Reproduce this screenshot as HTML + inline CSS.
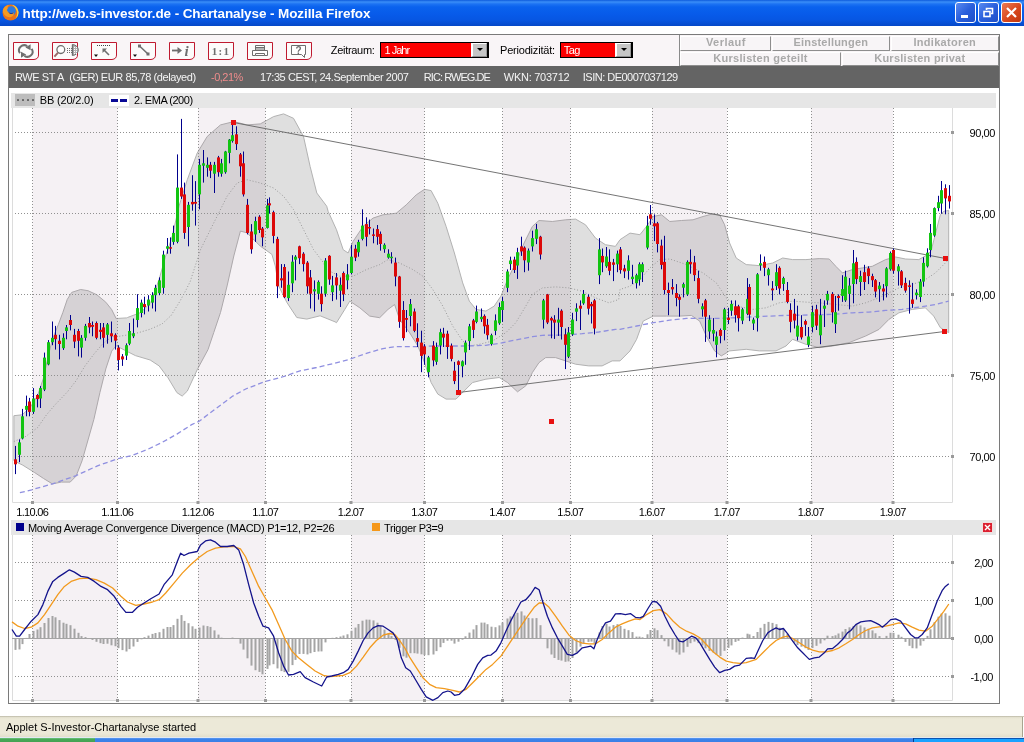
<!DOCTYPE html>
<html><head><meta charset="utf-8"><title>Chartanalyse - Mozilla Firefox</title>
<style>
html,body{margin:0;padding:0}
body{width:1024px;height:742px;position:relative;overflow:hidden;background:#fff;font-family:"Liberation Sans",Arial,sans-serif;font-size:12px;color:#000}
.abs{position:absolute}
#title{left:0;top:0;width:1024px;height:26px;background:linear-gradient(#0d5bdc 0,#3a8ef8 2px,#1c72f3 4px,#0a62ee 7px,#075ae9 15px,#0756e2 20px,#0548c8 26px)}
#title .t{left:22px;top:5px;color:#fff;font-weight:bold;font-size:13px;white-space:nowrap;text-shadow:1px 1px 0 #0a2a8a}
.wb{top:2px;width:19px;height:19px;border:1px solid #fff;border-radius:3px;background:linear-gradient(135deg,#5a8af0,#2a5fdc 50%,#1f4fc8)}
.wb.x{background:linear-gradient(135deg,#ec7a54,#d8481e 55%,#c03810)}
#frame{left:8px;top:34px;width:990px;height:668px;border:1px solid #7a7a7a;background:#fff}
#tbar{left:9px;top:35px;width:990px;height:31px;background:#f9f5f7}
.tb{top:42px;width:26px;height:18px}
#gbar{left:9px;top:66px;width:990px;height:22px;background:#646464}
#gbar span{position:absolute;top:4px;color:#f2f2f2;font-size:12px;white-space:nowrap;letter-spacing:-0.55px}
.leg{left:11px;width:985px;height:15px;background:#e6e6e6}
.leg span{position:absolute;top:0px;font-size:12px;white-space:nowrap;letter-spacing:-0.5px;line-height:15px}
.sel{top:42px;height:14px;border:1px solid #000;border-right-width:2px;background:#fb0000}
.sel i{position:absolute;right:0;top:0;width:16px;height:14px;box-sizing:border-box;background:#c6c6c6;border-left:2px solid #fff;border-top:1px solid #fff;border-bottom:1px solid #8c8c8c;border-right:1px solid #9a9a9a}
.sel i:after{content:"";position:absolute;left:3.5px;top:4px;border:3px solid transparent;border-top:3px solid #000;border-bottom:0}
.lbl{top:43px;font-size:12px;white-space:nowrap;letter-spacing:-0.2px}
.tab{border:1px solid;border-color:#fff #8e8e8e #8e8e8e #fff;background:#f8f5f7}
#status{left:0;top:716px;width:1024px;height:21px;background:linear-gradient(#b9b6a4,#e4e1cf 1.5px,#ece9d8 3px,#ece9d8 17px,#e2dfcc);box-sizing:border-box}
#status span{position:absolute;left:6px;top:3px;font-size:11px;white-space:nowrap}
</style></head><body>
<div id="title" class="abs">
<svg class="abs" style="left:1.5px;top:3.5px" width="17" height="17" viewBox="0 0 17 17"><circle cx="8.5" cy="8.5" r="8" fill="#ea721a"/><path d="M10 0.7A8 8 0 0 1 13.5 14.8A10 10 0 0 0 10 0.7Z" fill="#f8cf3c"/><circle cx="9.2" cy="7" r="4.7" fill="#2c7be0"/><path d="M0.7 6.5C1.5 3 4 1.2 7 1C5.5 2.2 5.2 3.4 5.8 4.6C4.6 5.4 4.8 7.2 6.4 8C8 9 10 9.2 11.8 8.4C12.4 10 11.2 12.4 9 13C5.6 13.8 1.6 12 0.7 6.5Z" fill="#f69a22"/><path d="M6.4 8C8 9 10 9.2 11.8 8.4C10.8 10.6 7.4 10.6 6.4 8Z" fill="#1c3a98"/></svg>
<div class="abs wb" style="left:955px"><div class="abs" style="left:5px;top:12px;width:7px;height:3px;background:#fff"></div></div>
<div class="abs wb" style="left:978px"><svg class="abs" style="left:0;top:0" width="19" height="19"><path d="M7.5 7V5.5H13.5V10.5H12" stroke="#fff" stroke-width="1.6" fill="none"/><rect x="5" y="8.5" width="6" height="5" stroke="#fff" stroke-width="1.6" fill="none"/></svg></div>
<div class="abs wb x" style="left:1001px"><svg class="abs" style="left:0;top:0" width="19" height="19"><path d="M5 5L14 14M14 5L5 14" stroke="#fff" stroke-width="2.2"/></svg></div>
</div>
<div id="frame" class="abs"></div><div id="tbar" class="abs"></div>
<!--TOOLBAR-->
<div class="abs sel" style="left:380px;width:106px"><i></i></div>
<div class="abs sel" style="left:560px;width:70px"><i></i></div>
<div class="abs" style="left:679px;top:35px;width:1px;height:31px;background:#8a8a8a"></div>
<div class="abs tab" style="left:680px;top:36px;width:89px;height:13px"></div>
<div class="abs tab" style="left:772px;top:36px;width:116px;height:13px"></div>
<div class="abs tab" style="left:891px;top:36px;width:106px;height:13px"></div>
<div class="abs tab" style="left:680px;top:52px;width:159px;height:12px"></div>
<div class="abs tab" style="left:842px;top:52px;width:155px;height:12px"></div>
<div id="gbar" class="abs"></div>
<div class="abs leg" style="top:93px">
<div class="abs" style="left:4px;top:1px;width:20px;height:12px;background:#bdbdbd"></div>
<div class="abs" style="left:5.5px;top:6px;width:2px;height:2px;border-radius:0.5px;background:#666;box-shadow:5px 0 0 #666,10px 0 0 #666,15px 0 0 #666"></div>
<div class="abs" style="left:98px;top:2px;width:20px;height:11px;background:#fff"></div>
<div class="abs" style="left:100px;top:6px;width:7px;height:3px;background:#0a0a96;box-shadow:9px 0 0 #0a0a96"></div>
</div>
<div class="abs leg" style="top:520px">
<div class="abs" style="left:5px;top:3px;width:8px;height:8px;background:#00008c"></div>
<div class="abs" style="left:360.5px;top:3px;width:8px;height:8px;background:#f5981a"></div>
<div class="abs" style="left:972px;top:3px;width:9px;height:9px;background:#dc2030;box-shadow:0 0 0 1px #f2dede"></div>
<svg class="abs" style="left:972px;top:3px" width="9" height="9"><path d="M2 2L7 7M7 2L2 7" stroke="#fff" stroke-width="1.4"/></svg>
</div>
<div id="status" class="abs"></div>
<div class="abs" style="left:0;top:737px;width:1024px;height:1px;background:#e2e9f2"></div>
<div class="abs" style="left:0;top:738px;width:1024px;height:4px;background:linear-gradient(#5c9af0,#3c82ea 1.5px,#3a80e6)"></div>
<div class="abs" style="left:0;top:738px;width:95px;height:4px;background:linear-gradient(#72c47c,#48a858 1.5px,#44a253)"></div>
<div class="abs" style="left:913px;top:738px;width:111px;height:4px;background:linear-gradient(#0c55b0,#0c55b0 1px,#1aa2ff 1.5px,#1aa2ff);border-left:1px solid #0a3a8a;box-sizing:border-box"></div>
<div class="abs" style="left:1022px;top:717px;width:2px;height:20px;background:#fff;border-left:1px solid #a8a590;box-sizing:border-box"></div>
<svg id="chart" width="1024" height="742" viewBox="0 0 1024 742" style="position:absolute;left:0;top:0;will-change:transform">
<rect x="12" y="108" width="940" height="394" fill="#fff"/>
<rect x="12" y="535" width="940" height="165" fill="#fff"/>
<path d="M13.9 415.7 L22.2 414.8 L30.2 407.4 L37.6 395.6 L43.6 377.8 L48 357 L52.4 339.3 L58.4 324.4 L62.8 312.6 L67.3 299.3 L71.7 292.4 L80.6 289.5 L88 290.7 L96.9 294.8 L105.8 302.2 L111.7 309.6 L116.1 318.5 L126.5 317.9 L127.5 317.5 L140.8 312.5 L150.8 302.5 L159.1 279.3 L165.7 256 L172.3 236.1 L179 206.2 L187.3 179.7 L197.2 153.1 L207.2 136.5 L220.5 124.9 L233.8 121.6 L247 124.9 L260.3 123.9 L273.6 116.6 L283.6 113.9 L293.5 118.3 L303.5 136.5 L310.1 166.4 L316.8 193 L326.7 206.2 L328.2 211.5 L336.5 229.8 L343.2 249.7 L348.1 253 L353.1 241.4 L363.1 226.4 L373 218.1 L383 214.8 L396.3 213.2 L406.2 204.9 L416.2 194.9 L424.5 189.3 L431.1 190.6 L437.8 203.2 L446.1 226.4 L454.4 253 L462.7 282.9 L469.3 301.1 L476 309.4 L485.9 311.1 L494.2 306.1 L500.9 296.2 L507.5 279.6 L515.8 263 L524.1 243 L532.4 226.4 L539 220.5 L552.3 221.5 L565.6 219.8 L575.6 219.1 L585.5 224.8 L595.5 238.1 L605.4 244.7 L615.4 246.4 L620 239.7 L630 233.1 L639.9 234.7 L646.6 226.4 L653.2 216.5 L661.5 214.8 L669.8 221.5 L681.4 220.5 L693 219.8 L703 216.5 L713 213.8 L719.6 214.8 L724.6 224.8 L729.6 243 L736.2 258 L746.2 264.6 L759.4 265.6 L772.7 263 L782.7 258 L792.6 259.6 L805.9 259.6 L819.2 258.6 L829.2 259 L835.8 266.3 L842.4 272.9 L852.4 269.6 L862.4 267.9 L872.3 266.3 L885.6 259.6 L895.6 257 L905.5 259 L918.8 259.6 L927.1 255 L931.1 251 L935.1 235.1 L940.4 214.5 L944 211.2 L948.7 210.5 L948.7 332.7 L940.4 327.7 L933.7 316.1 L925.4 307.8 L912.2 309.4 L898.9 312.8 L888.9 319.4 L879 329.4 L865.7 336 L849.1 342.6 L832.5 346 L819.2 347.6 L805.9 344.3 L792.6 339.3 L786 346 L776 350.9 L759.4 350.9 L746.2 349.3 L729.6 350.9 L721.3 355.9 L714.6 350.9 L706.3 336 L699.7 321.1 L691.4 315.4 L679.8 316.1 L666.5 316.1 L653.2 316.1 L643.2 321.1 L636.6 339.3 L630 350.9 L620 360.9 L612.1 360.9 L602.1 365.9 L588.8 365.9 L575.6 364.2 L565.6 360.9 L555.6 357.6 L545.7 357.6 L539 362.6 L532.4 372.5 L525.8 385.8 L517.5 391.8 L507.5 382.5 L499.2 377.5 L485.9 379.2 L472.6 382.5 L466 389.1 L456 399.1 L446.1 399.1 L437.8 394.1 L431.1 382.5 L424.5 362.6 L417.9 346 L409.6 332.7 L399.6 319.4 L394.6 304.5 L388 309.4 L379.7 317.7 L369.7 316.1 L359.8 307.8 L349.8 301.1 L344.8 309.4 L336.5 322.7 L335 321.8 L320.1 315.8 L306.8 319.1 L296.8 317.5 L286.9 302.5 L278.6 285.9 L275.3 266 L271.9 254.4 L260.3 246.1 L247 232.8 L240.4 231.1 L233.8 256 L227.1 285.9 L220.5 312.5 L213.8 332.4 L208 349.6 L197.6 368.9 L187.3 391.1 L182.2 396.1 L176.9 392.6 L168 377.8 L159.1 365.9 L150.2 360 L135.4 355.6 L126.5 351.1 L116.1 345.8 L111.7 351.1 L105.8 368.9 L99.9 392.6 L93.9 419.3 L88 440 L82.1 460.7 L76.1 476.1 L70.2 482.1 L61.3 482.1 L52.4 483.9 L43.6 478.5 L34.7 472.6 L22.8 465.2 L13.9 460.7Z" fill="#787878" fill-opacity="0.235" stroke="#b2b2b2" stroke-width="1" stroke-linejoin="round"/>
<rect x="32.5" y="108" width="85.0" height="394" fill="rgb(88,22,72)" fill-opacity="0.06"/>
<rect x="198" y="108" width="67.5" height="394" fill="rgb(88,22,72)" fill-opacity="0.06"/>
<rect x="351" y="108" width="73.5" height="394" fill="rgb(88,22,72)" fill-opacity="0.06"/>
<rect x="502.5" y="108" width="68.0" height="394" fill="rgb(88,22,72)" fill-opacity="0.06"/>
<rect x="652" y="108" width="75" height="394" fill="rgb(88,22,72)" fill-opacity="0.06"/>
<rect x="811" y="108" width="82" height="394" fill="rgb(88,22,72)" fill-opacity="0.06"/>
<rect x="32.5" y="535" width="85.0" height="165" fill="rgb(88,22,72)" fill-opacity="0.06"/>
<rect x="198" y="535" width="67.5" height="165" fill="rgb(88,22,72)" fill-opacity="0.06"/>
<rect x="351" y="535" width="73.5" height="165" fill="rgb(88,22,72)" fill-opacity="0.06"/>
<rect x="502.5" y="535" width="68.0" height="165" fill="rgb(88,22,72)" fill-opacity="0.06"/>
<rect x="652" y="535" width="75" height="165" fill="rgb(88,22,72)" fill-opacity="0.06"/>
<rect x="811" y="535" width="82" height="165" fill="rgb(88,22,72)" fill-opacity="0.06"/>
<path d="M32.5 108V502M32.5 535V700M117.5 108V502M117.5 535V700M198 108V502M198 535V700M265.5 108V502M265.5 535V700M351 108V502M351 535V700M424.5 108V502M424.5 535V700M502.5 108V502M502.5 535V700M570.5 108V502M570.5 535V700M652 108V502M652 535V700M727 108V502M727 535V700M811 108V502M811 535V700M893 108V502M893 535V700M12 132.5H952M12 213.5H952M12 294.5H952M12 375.5H952M12 456.5H952M12 562.5H952M12 600.5H952M12 638.5H952M12 676.5H952" stroke="#909090" stroke-width="1" stroke-dasharray="1 2" fill="none" shape-rendering="crispEdges"/>
<path d="M12.5 108V502.5H952.5V108M12.5 535V700.5H952.5V535" stroke="#dcdcdc" fill="none"/>
<g fill="#9a9a9a"><rect x="31.0" y="501" width="3" height="3"/><rect x="31.0" y="699" width="3" height="3"/><rect x="116.0" y="501" width="3" height="3"/><rect x="116.0" y="699" width="3" height="3"/><rect x="196.5" y="501" width="3" height="3"/><rect x="196.5" y="699" width="3" height="3"/><rect x="264.0" y="501" width="3" height="3"/><rect x="264.0" y="699" width="3" height="3"/><rect x="349.5" y="501" width="3" height="3"/><rect x="349.5" y="699" width="3" height="3"/><rect x="423.0" y="501" width="3" height="3"/><rect x="423.0" y="699" width="3" height="3"/><rect x="501.0" y="501" width="3" height="3"/><rect x="501.0" y="699" width="3" height="3"/><rect x="569.0" y="501" width="3" height="3"/><rect x="569.0" y="699" width="3" height="3"/><rect x="650.5" y="501" width="3" height="3"/><rect x="650.5" y="699" width="3" height="3"/><rect x="725.5" y="501" width="3" height="3"/><rect x="725.5" y="699" width="3" height="3"/><rect x="809.5" y="501" width="3" height="3"/><rect x="809.5" y="699" width="3" height="3"/><rect x="891.5" y="501" width="3" height="3"/><rect x="891.5" y="699" width="3" height="3"/><rect x="951" y="131.0" width="3" height="3"/><rect x="951" y="212.0" width="3" height="3"/><rect x="951" y="293.0" width="3" height="3"/><rect x="951" y="374.0" width="3" height="3"/><rect x="951" y="455.0" width="3" height="3"/><rect x="951" y="561.0" width="3" height="3"/><rect x="951" y="599.0" width="3" height="3"/><rect x="951" y="637.0" width="3" height="3"/><rect x="951" y="675.0" width="3" height="3"/></g>
<path d="M13.9 441.5 L25.8 436.4 L37.6 427.6 L46.5 414.8 L55.4 404.4 L67.3 392 L76.1 380.7 L85 365.9 L93.9 354.1 L102.8 343.7 L111.7 336.9 L119.1 336.3 L126.5 335.1 L138.4 332.7 L150.2 329.2 L162.1 323.9 L171 315.6 L179.9 301.3 L185.8 290.4 L190.2 281.5 L200.6 249.4 L213.8 222.8 L227.1 196.3 L237.1 183 L247 179.7 L260.3 183 L273.6 188 L283.6 196.3 L293.5 209.6 L303.5 229.5 L313.4 249.4 L323.4 262.7 L326.6 269.6 L339.8 276.2 L353.1 276.2 L366.4 269.6 L379.7 264.6 L388 259.6 L399.6 263 L412.9 269.6 L422.8 276.2 L432.8 289.5 L442.8 306.1 L452.7 326 L462.7 341 L469.3 346 L479.3 344.3 L492.6 341 L505.8 332.7 L515.8 322.7 L525.8 306.1 L532.4 294.5 L542.4 287.9 L555.6 286.9 L568.9 287.9 L582.2 291.2 L595.5 297.8 L608.8 302.8 L618.7 299.5 L620 289.5 L630 286.2 L639.9 279.6 L649.9 267.9 L659.8 259.6 L669.8 259 L686.4 264.6 L703 272.9 L716.3 282.9 L726.2 297.8 L736.2 306.1 L752.8 309.4 L766.1 307.8 L779.4 302.8 L792.6 301.1 L805.9 302.1 L819.2 302.8 L835.8 304.5 L852.4 306.1 L865.7 302.8 L879 297.8 L888.9 292.8 L898.9 287.9 L912.2 284.5 L925.4 279.6 L935.4 272.9 L943.7 264.6 L948.7 259.6" stroke="#9a9a9a" stroke-dasharray="1 2" fill="none"/>
<path d="M19.9 492.7 L31.7 489.8 L52.4 483.9 L76.1 475.6 L96.9 466.1 L117.6 458.7 L132.4 455.4 L147.3 449.5 L162.1 442.4 L176.9 434.1 L191.7 424.6 L199.2 421.2 L219.1 406.2 L232.4 396.3 L245.7 389 L265.6 381.3 L282.2 377 L300 370.9 L316.6 367.5 L333.2 363.6 L349.8 359.2 L366.4 353.3 L383 348.6 L396.3 346.6 L416.2 346.6 L432.8 346 L449.4 346 L466 346 L485.9 345.3 L499.2 343.3 L515.8 340 L532.4 336.7 L542.4 335.3 L565.6 335 L582.2 333.7 L598.8 332 L615.4 329.4 L620 329.4 L636.6 326 L653.2 322.7 L669.8 320.1 L686.4 318.4 L703 318.4 L719.6 318.4 L736.2 317.7 L752.8 316.7 L769.4 316.1 L786 315.4 L802.6 315.1 L819.2 314.8 L835.8 314.1 L852.4 312.8 L869 312.1 L885.6 310.4 L902.2 309.4 L918.8 307.1 L935.4 304.5 L948.7 301.1" stroke="#8f8fe0" stroke-width="1.3" stroke-dasharray="5 3" fill="none"/>
<path d="M233.5 122.5L945.5 258.5M458.5 392.5L944.5 331.5" stroke="#646464" stroke-width="0.9" fill="none"/>
<path d="M15.5 445.9V474.1M19.5 439.4V462.2M22.5 408.9V439.4M26.5 395.6V416.3M29.5 397.9V416.3M33.5 388.1V413.9M37.5 394.1V407.4M40.5 386.1V408M44.5 352.6V391.1M48.5 340.1V365.3M52.5 321.5V345.2M55.5 325.9V349.6M59.5 334.8V359.4M63.5 333.3V349.9M66.5 325V339.3M70.5 315V330.4M74.5 328.9V348.1M78.5 328.9V356.4M81.5 335.1V357.6M85.5 323.9V340.7M89.5 317V333.3M92.5 321.5V336.3M96.5 321.5V339.3M100.5 323V339.3M103.5 323V347.6M107.5 323V343.7M111.5 321.5V342.2M115.5 333.3V349.6M118.5 345.2V370.4M122.5 354.1V365.9M126.5 343.4V360M129.5 323V345.2M133.5 318.5V338.1M137.5 294.2V327.4M141.5 299.6V317.4M144.5 296.7V314.4M148.5 295.2V311.5M152.5 292.2V308.5M155.5 284.8V311.5M159.5 277.4V295.2M163.5 250.7V293.7M167.5 238V253.7M170.5 237.4V253.7M173.5 225.6V244.8M177.5 154.4V243.3M181.5 118.9V198.9M184.5 182.6V238.9M188.5 201.9V246.3M192.5 175.2V210.7M195.5 181.1V225.6M199.5 158.9V209.3M203.5 150V182.6M207.5 157.4V176.7M210.5 161.9V178.1M214.5 161.9V193M218.5 155.9V176.7M221.5 158.9V176.7M225.5 150.9V173.7M229.5 139V163.3M232.5 123.3V142.6M236.5 126.3V150M240.5 153V176.7M243.5 151.5V196.5M247.5 198.9V234.4M251.5 224.1V253.7M255.5 216.7V241.9M259.5 215.2V233M262.5 227V246.3M267.5 198.9V228.5M269.5 197.4V213.7M273.5 210.7V243.3M277.5 236.8V298.1M281.5 264.1V287.8M284.5 264.1V298.1M288.5 271.5V301.1M292.5 255.2V292.2M295.5 255.2V280.4M299.5 245.7V264.1M303.5 252.2V271.5M307.5 261.1V293.7M310.5 270V308.5M314.5 280.4V311.5M318.5 280.4V299.6M321.5 286.3V311.5M325.5 258.1V296.7M329.5 255.2V284.8M332.5 275.9V301.1M336.5 273V299.6M340.5 277.4V307M343.5 271.5V301.1M347.5 264.1V289.3M351.5 244.8V274.4M355.5 244.8V261.1M358.5 239.8V256.7M362.5 209.3V240.4M366.5 217.3V246.3M369.5 219.6V234.4M373.5 228.5V243.3M377.5 225V244.8M380.5 231.5V250.7M384.5 243.3V252.8M388.5 249.3V258.7M391.5 252.2V263.5M395.5 257.6V286.3M399.5 275.9V327.8M403.5 301.1V340.5M406.5 310V332.2M410.5 299V326.3M414.5 308.5V332.2M417.5 323.3V347M421.5 330.7V372.2M424.5 344.1V364.8M428.5 355.9V377.3M433.5 341.1V366.3M436.5 342.6V364.8M440.5 328.7V354.4M443.5 327.8V347M447.5 330.7V358.9M451.5 343.5V361.3M454.5 361.9V384.1M458.5 360.4V394.4M462.5 360.4V377.3M465.5 340.5V364.8M469.5 323.9V350M473.5 318.9V338.1M476.5 305.6V323.3M481.5 308.5V321.9M484.5 314.4V333.7M487.5 318.9V339.6M491.5 333.7V345.6M495.5 314.4V335.2M499.5 302.6V324.8M502.5 296.7V321.9M507.5 269.4V292.2M510.5 256.7V270M514.5 256.7V273M517.5 247.8V278.9M521.5 236.7V255.9M524.5 246.4V272.2M528.5 248.5V270.7M532.5 230.7V251.5M536.5 223.9V244.1M540.5 235.8V259.5M543.5 298.9V328.5M547.5 293.9V324.1M551.5 316.7V338.3M554.5 315.2V338.9M558.5 307.8V335.9M561.5 309.3V339.5M565.5 328.5V369.1M568.5 327V358.1M572.5 312.8V335.9M576.5 303.3V321.1M580.5 300.4V330M583.5 290V304.8M588.5 294.4V314.6M591.5 301.9V323.5M594.5 298.9V334.4M599.5 238.1V284.1M602.5 248.5V272.2M606.5 247V267.8M609.5 249.4V275.2M613.5 258.9V281.1M617.5 250.6V272.2M620.5 247V273.7M624.5 264.8V278.1M628.5 255.3V279.6M632.5 264.8V284.1M636.5 273.7V288.5M639.5 262.4V285.6M642.5 262.4V282M647.5 215.9V249.4M650.5 205V224.8M654.5 214.4V241.1M657.5 221.9V252.4M661.5 239.6V269.3M664.5 235.8V294.4M668.5 282.6V315.2M672.5 279V294.4M676.5 284.1V306.3M679.5 294.4V316.7M683.5 282.6V297.4M687.5 260.4V295.9M690.5 249.4V273.7M694.5 255.9V281.1M698.5 270.7V303.3M702.5 303.3V316.7M705.5 298.9V341.9M709.5 315.2V338.9M713.5 318.1V341.3M716.5 331.5V357.3M720.5 328.5V343.3M724.5 307.8V340.4M728.5 307.8V324.1M731.5 300.4V315.8M735.5 300.4V322.6M738.5 304.8V331.5M742.5 307.8V324.1M747.5 278.1V315.2M749.5 284.1V321.1M753.5 317.6V330M757.5 273.1V331.5M760.5 254.4V270.7M764.5 256.5V276.1M768.5 267.8V285.6M772.5 281.1V300.4M776.5 264.2V290M779.5 266.3V294.4M783.5 276.7V290.9M787.5 282V303.3M790.5 303.3V332.4M794.5 298.9V328.5M797.5 305.7V340.4M801.5 315.2V339.5M805.5 319.6V335.9M808.5 327V347.2M812.5 305.7V332.4M816.5 304.8V330M820.5 298.9V344.2M824.5 300.4V327M827.5 290.9V304.8M832.5 292.1V322.6M835.5 295.9V333M838.5 294.4V310.7M842.5 275.2V301.9M845.5 270.7V301.9M849.5 278.1V309.3M853.5 250V303.3M856.5 257.4V284.1M860.5 270.7V295.9M864.5 264.8V290M868.5 266.3V284.1M872.5 273.7V287M875.5 279V297.4M879.5 282V301.9M883.5 284.1V300.4M886.5 267.2V297.4M890.5 251.5V270.7M893.5 248.5V273.7M898.5 264.2V285.6M901.5 270.1V288M905.5 277.7V292.6M909.5 280.3V313.6M912.5 282.9V307.9M916.5 289.3V299.5M920.5 279V302.1M923.5 257.3V286.7M927.5 248.3V267.5M930.5 224V257.3M934.5 207.4V236.8M938.5 195.8V211.2M941.5 181V213.7M945.5 184.3V214.3M949.5 185.1V208.6" stroke="#00008c" stroke-width="1" fill="none"/>
<g fill="#12c412"><rect x="18" y="442.4" width="3" height="12.4"/><rect x="21" y="416.3" width="3" height="22.2"/><rect x="25" y="405.9" width="3" height="3.9"/><rect x="32" y="398.5" width="3" height="13.3"/><rect x="39" y="388.1" width="3" height="10.4"/><rect x="43" y="357.6" width="3" height="32"/><rect x="47" y="342.2" width="3" height="22.2"/><rect x="51" y="337.8" width="3" height="4.4"/><rect x="62" y="337.8" width="3" height="10.4"/><rect x="65" y="327.4" width="3" height="3.6"/><rect x="80" y="337.8" width="3" height="9.8"/><rect x="84" y="325.9" width="3" height="11.9"/><rect x="106" y="324.4" width="3" height="10.4"/><rect x="125" y="345.2" width="3" height="10.4"/><rect x="128" y="331" width="3" height="12.7"/><rect x="132" y="333.3" width="3" height="3"/><rect x="136" y="308.1" width="3" height="11.9"/><rect x="140" y="302.6" width="3" height="10.4"/><rect x="147" y="299.6" width="3" height="5.9"/><rect x="151" y="295.2" width="3" height="7.4"/><rect x="154" y="287.8" width="3" height="7.4"/><rect x="158" y="280.4" width="3" height="12.7"/><rect x="162" y="254.6" width="3" height="33.2"/><rect x="166" y="246.3" width="3" height="2.4"/><rect x="172" y="233" width="3" height="8.9"/><rect x="176" y="187.6" width="3" height="54.2"/><rect x="187" y="204.8" width="3" height="22.2"/><rect x="198" y="164.8" width="3" height="29.6"/><rect x="202" y="163.3" width="3" height="2.4"/><rect x="206" y="164.8" width="3" height="3"/><rect x="213" y="164.8" width="3" height="8.9"/><rect x="220" y="163.3" width="3" height="10.4"/><rect x="224" y="151.5" width="3" height="20.7"/><rect x="228" y="139.6" width="3" height="13.3"/><rect x="231" y="135.2" width="3" height="5.9"/><rect x="254" y="221.1" width="3" height="13.3"/><rect x="266" y="205.4" width="3" height="22.5"/><rect x="287" y="284.8" width="3" height="13.3"/><rect x="291" y="261.7" width="3" height="21.6"/><rect x="294" y="256.7" width="3" height="3"/><rect x="313" y="289.3" width="3" height="2.1"/><rect x="317" y="281.9" width="3" height="11.9"/><rect x="324" y="260.5" width="3" height="33.2"/><rect x="331" y="285.4" width="3" height="6.8"/><rect x="339" y="284.8" width="3" height="5.9"/><rect x="346" y="274.4" width="3" height="5.9"/><rect x="350" y="256.7" width="3" height="16.3"/><rect x="357" y="241.9" width="3" height="10.4"/><rect x="361" y="225.6" width="3" height="13.3"/><rect x="383" y="244.8" width="3" height="4.4"/><rect x="387" y="253.7" width="3" height="3.9"/><rect x="390" y="256.7" width="3" height="1.5"/><rect x="409" y="304.1" width="3" height="11.9"/><rect x="427" y="357.4" width="3" height="14.8"/><rect x="435" y="347" width="3" height="14.8"/><rect x="439" y="332.2" width="3" height="13.3"/><rect x="461" y="361.3" width="3" height="5"/><rect x="464" y="342.6" width="3" height="9.8"/><rect x="468" y="326.3" width="3" height="14.8"/><rect x="475" y="311.5" width="3" height="10.4"/><rect x="480" y="316.8" width="3" height="2.4"/><rect x="490" y="335.2" width="3" height="8.9"/><rect x="494" y="320.4" width="3" height="10.4"/><rect x="498" y="307" width="3" height="16.3"/><rect x="501" y="301.1" width="3" height="8.9"/><rect x="506" y="271.5" width="3" height="16.3"/><rect x="509" y="260.5" width="3" height="3.6"/><rect x="516" y="252.2" width="3" height="13.3"/><rect x="527" y="250.6" width="3" height="11.9"/><rect x="531" y="238.1" width="3" height="8.3"/><rect x="535" y="229.3" width="3" height="9.5"/><rect x="542" y="300.4" width="3" height="19.3"/><rect x="557" y="319.6" width="3" height="3"/><rect x="567" y="332.4" width="3" height="24.3"/><rect x="571" y="319.6" width="3" height="14.8"/><rect x="575" y="308.4" width="3" height="3.3"/><rect x="582" y="293.9" width="3" height="9.5"/><rect x="598" y="249.4" width="3" height="25.8"/><rect x="605" y="256.5" width="3" height="9.8"/><rect x="616" y="253.6" width="3" height="10.7"/><rect x="627" y="260.4" width="3" height="10.4"/><rect x="631" y="276.7" width="3" height="2.4"/><rect x="635" y="275.2" width="3" height="8"/><rect x="638" y="264.2" width="3" height="15.4"/><rect x="641" y="264.2" width="3" height="8"/><rect x="646" y="225.7" width="3" height="21.9"/><rect x="682" y="284.1" width="3" height="3.6"/><rect x="686" y="261.9" width="3" height="32.6"/><rect x="701" y="306.3" width="3" height="3"/><rect x="708" y="319.6" width="3" height="11.9"/><rect x="712" y="330" width="3" height="3.6"/><rect x="715" y="336.5" width="3" height="8.3"/><rect x="723" y="309.3" width="3" height="20.7"/><rect x="730" y="303.9" width="3" height="6.8"/><rect x="741" y="309.3" width="3" height="11.3"/><rect x="746" y="298.9" width="3" height="14.8"/><rect x="752" y="319.6" width="3" height="3.9"/><rect x="756" y="274.3" width="3" height="43.9"/><rect x="759" y="263.3" width="3" height="2.1"/><rect x="767" y="269.3" width="3" height="5.9"/><rect x="775" y="272.2" width="3" height="13.9"/><rect x="782" y="278.1" width="3" height="5.9"/><rect x="796" y="325.6" width="3" height="11"/><rect x="807" y="336.5" width="3" height="8.3"/><rect x="811" y="312.2" width="3" height="14.8"/><rect x="819" y="315.2" width="3" height="20.1"/><rect x="823" y="305.7" width="3" height="3"/><rect x="826" y="293.9" width="3" height="6.5"/><rect x="834" y="312.2" width="3" height="11.9"/><rect x="841" y="289.1" width="3" height="6.8"/><rect x="844" y="276.7" width="3" height="23.7"/><rect x="848" y="285.6" width="3" height="8.3"/><rect x="852" y="263.3" width="3" height="20.7"/><rect x="859" y="276.1" width="3" height="5.9"/><rect x="878" y="285.6" width="3" height="3.6"/><rect x="885" y="268.4" width="3" height="17.8"/><rect x="889" y="253" width="3" height="16.3"/><rect x="897" y="266.3" width="3" height="5"/><rect x="915" y="292.6" width="3" height="2.6"/><rect x="919" y="281.6" width="3" height="15.4"/><rect x="922" y="262.9" width="3" height="18.7"/><rect x="926" y="252.7" width="3" height="13.6"/><rect x="929" y="232.9" width="3" height="17.1"/><rect x="933" y="208.1" width="3" height="27.4"/><rect x="937" y="202.2" width="3" height="5.9"/><rect x="940" y="190.2" width="3" height="13.3"/></g>
<g fill="#dc0808"><rect x="14" y="459.3" width="3" height="5"/><rect x="28" y="401.5" width="3" height="10.4"/><rect x="36" y="395" width="3" height="4.1"/><rect x="54" y="334.8" width="3" height="4.4"/><rect x="58" y="340.7" width="3" height="3.3"/><rect x="69" y="320" width="3" height="5"/><rect x="73" y="334.8" width="3" height="6.8"/><rect x="77" y="331" width="3" height="9.8"/><rect x="88" y="323" width="3" height="4.4"/><rect x="91" y="325" width="3" height="1.8"/><rect x="95" y="323" width="3" height="14.8"/><rect x="99" y="329.8" width="3" height="2.1"/><rect x="102" y="327.4" width="3" height="10.4"/><rect x="110" y="333.3" width="3" height="3"/><rect x="114" y="334.8" width="3" height="5.9"/><rect x="117" y="347.6" width="3" height="12.4"/><rect x="121" y="356.4" width="3" height="3"/><rect x="143" y="304.1" width="3" height="3"/><rect x="169" y="247.2" width="3" height="1.5"/><rect x="180" y="187.6" width="3" height="8.9"/><rect x="183" y="194.4" width="3" height="38.5"/><rect x="191" y="201.9" width="3" height="2.4"/><rect x="194" y="201.9" width="3" height="1.8"/><rect x="209" y="164.8" width="3" height="5.9"/><rect x="217" y="157.4" width="3" height="14.8"/><rect x="235" y="134.3" width="3" height="9.8"/><rect x="239" y="154.4" width="3" height="11.9"/><rect x="242" y="163.3" width="3" height="31.1"/><rect x="246" y="204.8" width="3" height="28.1"/><rect x="250" y="231.5" width="3" height="17.8"/><rect x="258" y="216.7" width="3" height="13.3"/><rect x="261" y="228.5" width="3" height="8.9"/><rect x="268" y="203.3" width="3" height="2.1"/><rect x="272" y="212.2" width="3" height="23.7"/><rect x="276" y="238.9" width="3" height="47.4"/><rect x="280" y="278.3" width="3" height="2.1"/><rect x="283" y="267" width="3" height="30.2"/><rect x="298" y="246.3" width="3" height="11.9"/><rect x="302" y="253.7" width="3" height="10.4"/><rect x="306" y="262.6" width="3" height="23.7"/><rect x="309" y="277.4" width="3" height="16.3"/><rect x="320" y="293.7" width="3" height="10.4"/><rect x="328" y="255.8" width="3" height="23.7"/><rect x="335" y="277.4" width="3" height="8"/><rect x="342" y="273" width="3" height="21.3"/><rect x="354" y="248.7" width="3" height="8.9"/><rect x="365" y="224.1" width="3" height="12.7"/><rect x="368" y="227" width="3" height="1.5"/><rect x="372" y="234.4" width="3" height="1.5"/><rect x="376" y="229.1" width="3" height="7.7"/><rect x="379" y="233.9" width="3" height="10.1"/><rect x="394" y="262.6" width="3" height="13.9"/><rect x="398" y="276.5" width="3" height="45.3"/><rect x="402" y="310" width="3" height="28.1"/><rect x="405" y="318" width="3" height="1.8"/><rect x="413" y="311.5" width="3" height="19.3"/><rect x="416" y="338.1" width="3" height="3.6"/><rect x="420" y="342.6" width="3" height="13.3"/><rect x="423" y="346.4" width="3" height="8"/><rect x="432" y="345.6" width="3" height="14.8"/><rect x="442" y="333.7" width="3" height="3.9"/><rect x="446" y="333.7" width="3" height="13.3"/><rect x="450" y="345.6" width="3" height="13.3"/><rect x="453" y="370.7" width="3" height="10.4"/><rect x="457" y="361.3" width="3" height="3.6"/><rect x="472" y="320.4" width="3" height="9.5"/><rect x="483" y="315.9" width="3" height="10.4"/><rect x="486" y="324.8" width="3" height="10.4"/><rect x="513" y="259.6" width="3" height="10.4"/><rect x="520" y="246.4" width="3" height="5"/><rect x="523" y="247.6" width="3" height="12.7"/><rect x="539" y="236.7" width="3" height="17.8"/><rect x="546" y="294.4" width="3" height="28.1"/><rect x="550" y="318.1" width="3" height="2.4"/><rect x="553" y="319.6" width="3" height="3"/><rect x="560" y="310.7" width="3" height="16.3"/><rect x="564" y="334.4" width="3" height="10.4"/><rect x="579" y="305.7" width="3" height="3"/><rect x="587" y="296.8" width="3" height="11.9"/><rect x="590" y="303.9" width="3" height="2.4"/><rect x="593" y="300.4" width="3" height="28.1"/><rect x="601" y="255.9" width="3" height="6.5"/><rect x="608" y="261.9" width="3" height="8.9"/><rect x="612" y="262.4" width="3" height="2.4"/><rect x="619" y="249.4" width="3" height="20.7"/><rect x="623" y="268.4" width="3" height="3"/><rect x="649" y="214.4" width="3" height="4.4"/><rect x="653" y="223.3" width="3" height="3"/><rect x="656" y="223.3" width="3" height="20.7"/><rect x="660" y="245.6" width="3" height="19.3"/><rect x="663" y="261.9" width="3" height="28.1"/><rect x="667" y="290" width="3" height="3"/><rect x="671" y="287" width="3" height="2.4"/><rect x="675" y="293" width="3" height="5"/><rect x="678" y="296.8" width="3" height="3"/><rect x="689" y="261.9" width="3" height="2.4"/><rect x="693" y="262.4" width="3" height="12.7"/><rect x="697" y="278.1" width="3" height="20.7"/><rect x="704" y="300.4" width="3" height="16.3"/><rect x="719" y="330" width="3" height="5.9"/><rect x="727" y="317.6" width="3" height="2.4"/><rect x="734" y="306.3" width="3" height="8.9"/><rect x="737" y="306.3" width="3" height="11.9"/><rect x="748" y="287" width="3" height="27.6"/><rect x="763" y="261.9" width="3" height="5.9"/><rect x="771" y="288.5" width="3" height="1.8"/><rect x="778" y="267.8" width="3" height="20.7"/><rect x="786" y="290" width="3" height="11.9"/><rect x="789" y="309.9" width="3" height="11.9"/><rect x="793" y="313.7" width="3" height="6.8"/><rect x="800" y="327" width="3" height="10.4"/><rect x="804" y="321.1" width="3" height="3.6"/><rect x="815" y="309.3" width="3" height="16.3"/><rect x="831" y="293.9" width="3" height="18.4"/><rect x="837" y="295.9" width="3" height="2.1"/><rect x="855" y="261.9" width="3" height="17.2"/><rect x="863" y="272.2" width="3" height="9.8"/><rect x="867" y="268.4" width="3" height="7.7"/><rect x="871" y="276.1" width="3" height="4.1"/><rect x="874" y="280.2" width="3" height="11.3"/><rect x="882" y="288.5" width="3" height="3"/><rect x="892" y="250" width="3" height="20.7"/><rect x="900" y="271.3" width="3" height="14.1"/><rect x="904" y="282.9" width="3" height="7.7"/><rect x="908" y="285.4" width="3" height="1.5"/><rect x="911" y="299.5" width="3" height="4.4"/><rect x="944" y="188.2" width="3" height="10.2"/><rect x="948" y="195.8" width="3" height="5.6"/></g>
<rect x="231.0" y="120.0" width="5" height="5" fill="#e81010"/>
<rect x="943.0" y="256.0" width="5" height="5" fill="#e81010"/>
<rect x="456.0" y="390.0" width="5" height="5" fill="#e81010"/>
<rect x="942.0" y="329.0" width="5" height="5" fill="#e81010"/>
<rect x="549.0" y="419.0" width="5" height="5" fill="#e81010"/>
<g fill="#a4a4a4"><rect x="14.5" y="638.5" width="2" height="11.4"/><rect x="18.5" y="638.5" width="2" height="10.9"/><rect x="21.5" y="638.5" width="2" height="5.6"/><rect x="25.5" y="637.9" width="2" height="0.6"/><rect x="28.5" y="634" width="2" height="4.5"/><rect x="32.5" y="631" width="2" height="7.5"/><rect x="36.5" y="629.5" width="2" height="9"/><rect x="39.5" y="627.2" width="2" height="11.3"/><rect x="43.5" y="623" width="2" height="15.5"/><rect x="47.5" y="618" width="2" height="20.5"/><rect x="51.5" y="616" width="2" height="22.5"/><rect x="54.5" y="617.3" width="2" height="21.2"/><rect x="58.5" y="620.1" width="2" height="18.4"/><rect x="62.5" y="622.7" width="2" height="15.8"/><rect x="65.5" y="623.8" width="2" height="14.7"/><rect x="69.5" y="625.2" width="2" height="13.3"/><rect x="73.5" y="628.7" width="2" height="9.8"/><rect x="77.5" y="632.8" width="2" height="5.7"/><rect x="80.5" y="636.1" width="2" height="2.4"/><rect x="84.5" y="637.1" width="2" height="1.4"/><rect x="91.5" y="638.5" width="2" height="1.4"/><rect x="95.5" y="638.5" width="2" height="3.3"/><rect x="99.5" y="638.5" width="2" height="4.7"/><rect x="102.5" y="638.5" width="2" height="5.5"/><rect x="106.5" y="638.5" width="2" height="5.2"/><rect x="110.5" y="638.5" width="2" height="6.8"/><rect x="114.5" y="638.5" width="2" height="7.7"/><rect x="117.5" y="638.5" width="2" height="9.7"/><rect x="121.5" y="638.5" width="2" height="11.6"/><rect x="125.5" y="638.5" width="2" height="13"/><rect x="128.5" y="638.5" width="2" height="10.6"/><rect x="132.5" y="638.5" width="2" height="8"/><rect x="136.5" y="638.5" width="2" height="3.4"/><rect x="140.5" y="638.5" width="2" height="0.8"/><rect x="143.5" y="637.2" width="2" height="1.3"/><rect x="147.5" y="635.6" width="2" height="2.9"/><rect x="151.5" y="633.9" width="2" height="4.6"/><rect x="154.5" y="633" width="2" height="5.5"/><rect x="158.5" y="632.2" width="2" height="6.3"/><rect x="162.5" y="628.8" width="2" height="9.7"/><rect x="166.5" y="627" width="2" height="11.5"/><rect x="169.5" y="627" width="2" height="11.5"/><rect x="172.5" y="625.1" width="2" height="13.4"/><rect x="176.5" y="618.8" width="2" height="19.7"/><rect x="180.5" y="615.1" width="2" height="23.4"/><rect x="183.5" y="620.9" width="2" height="17.6"/><rect x="187.5" y="623.2" width="2" height="15.3"/><rect x="191.5" y="626.3" width="2" height="12.2"/><rect x="194.5" y="628.8" width="2" height="9.7"/><rect x="198.5" y="627.6" width="2" height="10.9"/><rect x="202.5" y="625.5" width="2" height="13"/><rect x="206.5" y="626.1" width="2" height="12.4"/><rect x="209.5" y="626.9" width="2" height="11.6"/><rect x="213.5" y="630.4" width="2" height="8.1"/><rect x="217.5" y="634.6" width="2" height="3.9"/><rect x="220.5" y="637.7" width="2" height="0.8"/><rect x="228.5" y="638" width="2" height="0.5"/><rect x="231.5" y="637.6" width="2" height="0.9"/><rect x="239.5" y="638.5" width="2" height="5.1"/><rect x="242.5" y="638.5" width="2" height="11.1"/><rect x="246.5" y="638.5" width="2" height="19.8"/><rect x="250.5" y="638.5" width="2" height="27.1"/><rect x="254.5" y="638.5" width="2" height="31.7"/><rect x="258.5" y="638.5" width="2" height="33.4"/><rect x="261.5" y="638.5" width="2" height="35.8"/><rect x="266.5" y="638.5" width="2" height="30.4"/><rect x="268.5" y="638.5" width="2" height="26.9"/><rect x="272.5" y="638.5" width="2" height="25.7"/><rect x="276.5" y="638.5" width="2" height="29.9"/><rect x="280.5" y="638.5" width="2" height="32.6"/><rect x="283.5" y="638.5" width="2" height="33.6"/><rect x="287.5" y="638.5" width="2" height="33.3"/><rect x="291.5" y="638.5" width="2" height="26.6"/><rect x="294.5" y="638.5" width="2" height="21.4"/><rect x="298.5" y="638.5" width="2" height="15.5"/><rect x="302.5" y="638.5" width="2" height="15.4"/><rect x="306.5" y="638.5" width="2" height="15.9"/><rect x="309.5" y="638.5" width="2" height="14.7"/><rect x="313.5" y="638.5" width="2" height="13.5"/><rect x="317.5" y="638.5" width="2" height="13"/><rect x="320.5" y="638.5" width="2" height="12.9"/><rect x="324.5" y="638.5" width="2" height="3.9"/><rect x="331.5" y="637.8" width="2" height="0.7"/><rect x="335.5" y="637.2" width="2" height="1.3"/><rect x="339.5" y="636.5" width="2" height="2"/><rect x="342.5" y="635.5" width="2" height="3"/><rect x="346.5" y="634.3" width="2" height="4.2"/><rect x="350.5" y="630.8" width="2" height="7.7"/><rect x="354.5" y="627.6" width="2" height="10.9"/><rect x="357.5" y="624" width="2" height="14.5"/><rect x="361.5" y="620.7" width="2" height="17.8"/><rect x="365.5" y="619.6" width="2" height="18.9"/><rect x="368.5" y="619.7" width="2" height="18.8"/><rect x="372.5" y="620.4" width="2" height="18.1"/><rect x="376.5" y="622.7" width="2" height="15.8"/><rect x="379.5" y="625.6" width="2" height="12.9"/><rect x="383.5" y="629.6" width="2" height="8.9"/><rect x="387.5" y="633.3" width="2" height="5.2"/><rect x="390.5" y="636.1" width="2" height="2.4"/><rect x="394.5" y="638.5" width="2" height="1.5"/><rect x="398.5" y="638.5" width="2" height="9.3"/><rect x="402.5" y="638.5" width="2" height="17.8"/><rect x="405.5" y="638.5" width="2" height="19.2"/><rect x="409.5" y="638.5" width="2" height="14.7"/><rect x="413.5" y="638.5" width="2" height="14.7"/><rect x="416.5" y="638.5" width="2" height="15.1"/><rect x="420.5" y="638.5" width="2" height="15.8"/><rect x="423.5" y="638.5" width="2" height="16.6"/><rect x="427.5" y="638.5" width="2" height="16.7"/><rect x="432.5" y="638.5" width="2" height="16"/><rect x="435.5" y="638.5" width="2" height="12.6"/><rect x="439.5" y="638.5" width="2" height="8.7"/><rect x="442.5" y="638.5" width="2" height="4.4"/><rect x="446.5" y="638.5" width="2" height="2.2"/><rect x="450.5" y="638.5" width="2" height="2.2"/><rect x="453.5" y="638.5" width="2" height="5.1"/><rect x="457.5" y="638.5" width="2" height="3.2"/><rect x="461.5" y="638.5" width="2" height="1.2"/><rect x="464.5" y="636.3" width="2" height="2.2"/><rect x="468.5" y="632.6" width="2" height="5.9"/><rect x="472.5" y="629.4" width="2" height="9.1"/><rect x="475.5" y="625.1" width="2" height="13.4"/><rect x="480.5" y="622.6" width="2" height="15.9"/><rect x="483.5" y="622.6" width="2" height="15.9"/><rect x="486.5" y="624.2" width="2" height="14.3"/><rect x="490.5" y="626.7" width="2" height="11.8"/><rect x="494.5" y="627.2" width="2" height="11.3"/><rect x="498.5" y="625.4" width="2" height="13.1"/><rect x="501.5" y="622.5" width="2" height="16"/><rect x="506.5" y="618.5" width="2" height="20"/><rect x="509.5" y="616.4" width="2" height="22.1"/><rect x="513.5" y="614.3" width="2" height="24.2"/><rect x="516.5" y="612.8" width="2" height="25.7"/><rect x="520.5" y="611.4" width="2" height="27.1"/><rect x="523.5" y="615.5" width="2" height="23"/><rect x="527.5" y="617.9" width="2" height="20.6"/><rect x="531.5" y="618.3" width="2" height="20.2"/><rect x="535.5" y="618.1" width="2" height="20.4"/><rect x="539.5" y="625.2" width="2" height="13.3"/><rect x="546.5" y="638.5" width="2" height="9.8"/><rect x="550.5" y="638.5" width="2" height="16"/><rect x="553.5" y="638.5" width="2" height="19.5"/><rect x="557.5" y="638.5" width="2" height="21.4"/><rect x="560.5" y="638.5" width="2" height="22.1"/><rect x="564.5" y="638.5" width="2" height="23.3"/><rect x="567.5" y="638.5" width="2" height="22.9"/><rect x="571.5" y="638.5" width="2" height="19.5"/><rect x="575.5" y="638.5" width="2" height="14.1"/><rect x="579.5" y="638.5" width="2" height="8.1"/><rect x="582.5" y="638.5" width="2" height="4.9"/><rect x="587.5" y="638.5" width="2" height="3.4"/><rect x="590.5" y="638.5" width="2" height="3.1"/><rect x="593.5" y="638.5" width="2" height="5"/><rect x="598.5" y="632.5" width="2" height="6"/><rect x="601.5" y="626" width="2" height="12.5"/><rect x="605.5" y="623.7" width="2" height="14.8"/><rect x="608.5" y="626.5" width="2" height="12"/><rect x="612.5" y="625.1" width="2" height="13.4"/><rect x="616.5" y="624.2" width="2" height="14.3"/><rect x="619.5" y="626" width="2" height="12.5"/><rect x="623.5" y="628.8" width="2" height="9.7"/><rect x="627.5" y="630.2" width="2" height="8.3"/><rect x="631.5" y="632.1" width="2" height="6.4"/><rect x="635.5" y="636.6" width="2" height="1.9"/><rect x="638.5" y="636.6" width="2" height="1.9"/><rect x="641.5" y="637.3" width="2" height="1.2"/><rect x="646.5" y="634.3" width="2" height="4.2"/><rect x="649.5" y="630" width="2" height="8.5"/><rect x="653.5" y="628.3" width="2" height="10.2"/><rect x="656.5" y="630.2" width="2" height="8.3"/><rect x="660.5" y="635.1" width="2" height="3.4"/><rect x="663.5" y="638.5" width="2" height="2.7"/><rect x="667.5" y="638.5" width="2" height="7.9"/><rect x="671.5" y="638.5" width="2" height="11.2"/><rect x="675.5" y="638.5" width="2" height="13.9"/><rect x="678.5" y="638.5" width="2" height="16.1"/><rect x="682.5" y="638.5" width="2" height="14"/><rect x="686.5" y="638.5" width="2" height="8.3"/><rect x="689.5" y="638.5" width="2" height="4.7"/><rect x="693.5" y="638.5" width="2" height="3.1"/><rect x="697.5" y="638.5" width="2" height="4.6"/><rect x="701.5" y="638.5" width="2" height="7"/><rect x="704.5" y="638.5" width="2" height="9.8"/><rect x="708.5" y="638.5" width="2" height="12.4"/><rect x="712.5" y="638.5" width="2" height="14"/><rect x="715.5" y="638.5" width="2" height="16.2"/><rect x="719.5" y="638.5" width="2" height="17.4"/><rect x="723.5" y="638.5" width="2" height="12.3"/><rect x="727.5" y="638.5" width="2" height="9.4"/><rect x="730.5" y="638.5" width="2" height="6.9"/><rect x="734.5" y="638.5" width="2" height="3.4"/><rect x="737.5" y="638.5" width="2" height="2.3"/><rect x="741.5" y="637.6" width="2" height="0.9"/><rect x="746.5" y="633.7" width="2" height="4.8"/><rect x="748.5" y="634.4" width="2" height="4.1"/><rect x="752.5" y="636" width="2" height="2.5"/><rect x="756.5" y="632" width="2" height="6.5"/><rect x="759.5" y="627.8" width="2" height="10.7"/><rect x="763.5" y="623.9" width="2" height="14.6"/><rect x="767.5" y="621.9" width="2" height="16.6"/><rect x="771.5" y="622.9" width="2" height="15.6"/><rect x="775.5" y="624.2" width="2" height="14.3"/><rect x="778.5" y="627.7" width="2" height="10.8"/><rect x="782.5" y="629" width="2" height="9.5"/><rect x="786.5" y="633.9" width="2" height="4.6"/><rect x="793.5" y="638.5" width="2" height="4.1"/><rect x="796.5" y="638.5" width="2" height="6.6"/><rect x="800.5" y="638.5" width="2" height="8.2"/><rect x="804.5" y="638.5" width="2" height="9.7"/><rect x="807.5" y="638.5" width="2" height="11.5"/><rect x="811.5" y="638.5" width="2" height="9.5"/><rect x="815.5" y="638.5" width="2" height="7.3"/><rect x="819.5" y="638.5" width="2" height="5"/><rect x="823.5" y="638.5" width="2" height="1.8"/><rect x="826.5" y="635.7" width="2" height="2.8"/><rect x="831.5" y="636.1" width="2" height="2.4"/><rect x="834.5" y="635.3" width="2" height="3.2"/><rect x="837.5" y="633.5" width="2" height="5"/><rect x="841.5" y="631.6" width="2" height="6.9"/><rect x="844.5" y="629" width="2" height="9.5"/><rect x="848.5" y="627.3" width="2" height="11.2"/><rect x="852.5" y="625.9" width="2" height="12.6"/><rect x="855.5" y="624.7" width="2" height="13.8"/><rect x="859.5" y="625.4" width="2" height="13.1"/><rect x="863.5" y="627.4" width="2" height="11.1"/><rect x="867.5" y="628.8" width="2" height="9.7"/><rect x="871.5" y="630.4" width="2" height="8.1"/><rect x="874.5" y="633.3" width="2" height="5.2"/><rect x="878.5" y="636.1" width="2" height="2.4"/><rect x="882.5" y="638.5" width="2" height="0.6"/><rect x="885.5" y="635.9" width="2" height="2.6"/><rect x="889.5" y="632.8" width="2" height="5.7"/><rect x="892.5" y="632.8" width="2" height="5.7"/><rect x="897.5" y="634.7" width="2" height="3.8"/><rect x="900.5" y="636.8" width="2" height="1.7"/><rect x="904.5" y="638.5" width="2" height="3.4"/><rect x="908.5" y="638.5" width="2" height="7.3"/><rect x="911.5" y="638.5" width="2" height="9.7"/><rect x="915.5" y="638.5" width="2" height="9.9"/><rect x="919.5" y="638.5" width="2" height="7.1"/><rect x="922.5" y="638.5" width="2" height="2.6"/><rect x="926.5" y="635.9" width="2" height="2.6"/><rect x="929.5" y="629.3" width="2" height="9.2"/><rect x="933.5" y="622.2" width="2" height="16.3"/><rect x="937.5" y="616.7" width="2" height="21.8"/><rect x="940.5" y="613.6" width="2" height="24.9"/><rect x="944.5" y="613.3" width="2" height="25.2"/><rect x="948.5" y="615.7" width="2" height="22.8"/></g>
<path d="M12 638.5H952" stroke="#a4a4a4" stroke-width="1"/>
<path d="M12 621.9 L18 626.2 L24.6 628.5 L31.2 627.2 L37.9 622.9 L44.5 614.6 L51.2 604.6 L57.8 594.7 L64.4 586.4 L71.1 581.4 L79.4 578.7 L87.7 578.1 L96 579.7 L104.3 583.1 L112.6 588 L120.9 596.3 L127.5 602 L135.8 605.3 L144.1 604 L152.4 602 L159.1 599.7 L165.7 593 L174 583.1 L182.3 573.1 L190.6 564.8 L198.9 557.5 L207.2 551.5 L215.5 548.2 L223.8 546.9 L233.8 546.5 L240.4 548.9 L245.4 556.5 L252 571.4 L258.7 586.4 L265.3 598 L271.9 609.6 L278.6 624.6 L285.2 639.5 L291.9 651.1 L298.5 657.8 L306.8 664.4 L315.1 671 L323.4 675.4 L330 676.7 L336.7 676 L343.3 675.4 L349.9 672.7 L356.5 666.1 L363.2 657.1 L369.8 647.8 L376.4 640.5 L383.1 635.2 L389.7 633.5 L394.7 634.5 L399.7 640.5 L404.7 647.8 L409.6 657.1 L416.3 667.7 L422.9 677.7 L429.6 684.3 L436.2 687.6 L444.5 688.6 L452.8 690.3 L459.4 692 L466.1 689.3 L472.7 682.7 L479.4 676 L486 669.4 L492.6 664.4 L500.9 656.1 L507.6 646.1 L514.2 636.2 L520.9 626.2 L527.5 616.3 L534.1 607.3 L539.1 603 L544.1 603 L549.1 607.3 L555.7 616.3 L562.4 626.2 L569 635.2 L575.6 640.5 L582.3 643.2 L588.9 643.8 L595.6 643.8 L602.2 639.5 L608.8 632.9 L615.5 627.2 L622.1 623.9 L628.8 621.2 L635.4 618.9 L640 619.6 L646.6 614.6 L653.3 610.6 L659.9 609.6 L666.6 613.9 L673.2 621.2 L679.8 627.2 L686.5 631.2 L693.1 633.9 L699.8 637.8 L706.4 644.5 L713 651.8 L719.7 657.1 L726.3 661.1 L733 662.7 L739.6 663.4 L746.2 662.7 L756.2 659.4 L762.8 652.8 L769.5 646.1 L776.1 640.5 L782.8 637.2 L787.7 636.2 L792.7 638.5 L799.4 642.8 L806 647.1 L812.6 650.1 L819.3 651.8 L825.9 651.8 L832.6 650.5 L839.2 647.8 L845.8 643.8 L852.5 639.5 L859.1 634.5 L865.8 630.5 L872.4 627.9 L879 626.9 L885.7 626.2 L892.3 624.6 L899 622.9 L905.6 623.9 L912.2 627.2 L918.9 630.2 L925.5 631.2 L932.2 626.2 L938.8 617.9 L943.8 611.3 L948.8 604" stroke="#f29a1e" stroke-width="1.3" fill="none" stroke-linejoin="round"/>
<path d="M12 629.5 L16.3 636.2 L19.6 636.2 L24.6 629.5 L31.2 621.2 L37.9 614.6 L42.9 604.6 L47.8 591.4 L52.8 581.4 L57.8 577.4 L64.4 573.1 L69.4 569.8 L74.4 572.1 L81 576.4 L87.7 577.4 L94.3 581.4 L101 586.4 L107.6 589.7 L114.2 596.3 L120.9 606.3 L125.9 612.3 L132.5 612.3 L137.5 607.3 L144.1 603 L150.8 598.7 L159.1 594 L164 584.7 L172.3 574.8 L177.3 561.5 L180.6 553.2 L184 555.5 L188.9 553.2 L197.2 551.5 L200.6 544.9 L205.5 540.9 L210.5 539.9 L215.5 542.2 L220.5 546.5 L227.1 546.5 L233.8 545.5 L238.7 549.9 L243.7 564.8 L248.7 584.7 L253.7 603 L258.7 616.3 L263 626.2 L268.6 627.9 L273.6 636.2 L278.6 652.8 L283.6 666.1 L288.5 675 L293.5 674.4 L300.2 671.7 L305.1 677.7 L313.4 682 L321.7 686 L326.7 677 L331.7 676 L338.3 674.4 L343.3 672.7 L348.2 669.4 L353.2 661.1 L358.2 651.1 L363.2 640.5 L368.1 632.9 L373.1 627.9 L378.1 625.6 L383.1 626.2 L388.1 629.5 L393 632.9 L397 639.5 L401.3 657.8 L405.7 667.7 L410.3 671 L416.3 681 L421.3 689.3 L426.2 696.9 L432.9 700.3 L437.9 697.6 L442.8 692.6 L447.8 691 L451.1 692 L454.5 695.3 L459.4 694.3 L464.4 689.3 L471.1 677.7 L477.7 664.4 L482.7 657.8 L487.7 655.4 L491 655.1 L496 651.1 L500.9 642.8 L505.9 631.2 L510.9 620.6 L515.9 611.3 L520.9 602 L525.8 599.7 L530.8 594 L535.1 587.4 L539.1 589.7 L543.1 603 L547.4 616.3 L552.4 627.9 L557.4 637.8 L562.4 646.1 L567.3 654.4 L572.3 655.4 L577.3 652.8 L582.3 647.8 L587.3 646.8 L590.6 646.1 L593.9 648.8 L597.2 639.5 L601.5 629.5 L605.5 622.9 L610.5 621.2 L615.5 613.9 L620.5 613.6 L625.4 614.6 L630.4 613.6 L635.4 617.3 L640 617.9 L643.3 616.3 L648.3 608 L652.6 601.3 L656.6 602 L660.6 606.3 L664.9 616.3 L669.9 626.2 L674.9 634.5 L679.2 641.2 L683.2 641.8 L688.1 638.5 L691.5 636.2 L695.8 637.8 L699.8 642.8 L704.7 651.1 L709.7 659.4 L714.7 667.1 L719.7 672.7 L724.7 670.4 L729.6 669.4 L734.6 666.1 L739.6 665.1 L746.2 658.4 L751.2 657.8 L754.5 658.4 L757.9 651.1 L762.8 640.5 L767.8 632.9 L771.1 630.5 L776.1 627.9 L779.4 629.5 L783.4 628.5 L787.7 633.9 L792.7 641.2 L797.7 647.8 L802.7 652.8 L806 656.1 L809.3 659.4 L814.3 657.8 L819.3 657.1 L824.3 652.8 L827.6 648.8 L832.6 648.5 L837.5 644.5 L842.5 639.5 L847.5 632.9 L850.8 630.5 L855.8 624.6 L860.8 621.9 L865.8 621.2 L870.7 620.6 L875.7 622.9 L879 624.6 L882.4 627.2 L887.3 622.9 L890.7 619.6 L895.6 618.9 L900.6 621.2 L905.6 627.9 L910.6 634.5 L914.9 637.8 L918.2 637.8 L922.2 634.5 L927.2 627.9 L932.2 614.6 L937.1 601.3 L942.1 590.7 L945.4 586.4 L948.8 583.7" stroke="#14148c" stroke-width="1.3" fill="none" stroke-linejoin="round"/>
<g transform="translate(13 42)"><path d="M0.5 0.5H25.5V13Q25.5 17 21 17.5H0.5Z" fill="#fcfbfb" stroke="#bf1a30" stroke-width="1" stroke-linejoin="round"/><path d="M7 11.2A5.2 5 0 0 1 14.2 4.2M18.6 6.8A5.2 5 0 0 1 11.4 13.8" stroke="#6e6e6e" stroke-width="2" fill="none"/><path d="M12.4 5.6L17.6 2.2 17.6 8.2ZM13.2 12.4L8 15.8 8 9.8Z" fill="#6e6e6e"/></g>
<g transform="translate(52 42)"><path d="M0.5 0.5H25.5V13Q25.5 17 21 17.5H0.5Z" fill="#fcfbfb" stroke="#bf1a30" stroke-width="1" stroke-linejoin="round"/><circle cx="8.8" cy="7.6" r="3.9" stroke="#6e6e6e" stroke-width="1.3" fill="#fff"/><path d="M6 10.6L2.4 14.6" stroke="#9a6a6a" stroke-width="2"/><path d="M20.5 2.6A5.8 5.4 0 0 1 20.5 13.4Z" fill="#b4b4b4" stroke="#6e6e6e" stroke-width="1"/><path d="M20.5 2.5V13.5" stroke="#6e6e6e" stroke-width="1.4"/><path d="M15 6.5H20M15 8.5H20M15 10.5H20" stroke="#6e6e6e" stroke-width="1" stroke-dasharray="1 1"/><path d="M22 5.5H25M22 7.5H26M22 9.5H26M22 11.5H25" stroke="#fff" stroke-width="1" stroke-dasharray="1 1"/></g>
<g transform="translate(91 42)"><path d="M0.5 0.5H25.5V13Q25.5 17 21 17.5H0.5Z" fill="#fcfbfb" stroke="#bf1a30" stroke-width="1" stroke-linejoin="round"/><path d="M6 3.5H19" stroke="#444" stroke-width="1" stroke-dasharray="1 1"/><path d="M3 12.5H7L5 15Z" fill="#111"/><path d="M18 13L12.5 7.5" stroke="#6e6e6e" stroke-width="1.6"/><path d="M11.5 6.5H16L11.5 11Z" fill="#6e6e6e"/></g>
<g transform="translate(130 42)"><path d="M0.5 0.5H25.5V13Q25.5 17 21 17.5H0.5Z" fill="#fcfbfb" stroke="#bf1a30" stroke-width="1" stroke-linejoin="round"/><path d="M3 12.5H7L5 15Z" fill="#111"/><path d="M9.5 4L18 12" stroke="#6e6e6e" stroke-width="1.5"/><rect x="8" y="2.5" width="3" height="3" fill="#6e6e6e"/><rect x="16.5" y="10.5" width="3" height="3" fill="#6e6e6e"/></g>
<g transform="translate(169 42)"><path d="M0.5 0.5H25.5V13Q25.5 17 21 17.5H0.5Z" fill="#fcfbfb" stroke="#bf1a30" stroke-width="1" stroke-linejoin="round"/><path d="M3 8.5H11" stroke="#6e6e6e" stroke-width="1.8"/><path d="M8.5 5L13 8.5 8.5 12Z" fill="#6e6e6e"/><text x="15.5" y="13.5" font-family="Liberation Serif, serif" font-style="italic" font-weight="bold" font-size="15" fill="#6e6e6e">i</text></g>
<g transform="translate(208 42)"><path d="M0.5 0.5H25.5V13Q25.5 17 21 17.5H0.5Z" fill="#fcfbfb" stroke="#bf1a30" stroke-width="1" stroke-linejoin="round"/><text x="13" y="12.8" text-anchor="middle" font-family="Liberation Serif, serif" font-weight="bold" font-size="11" letter-spacing="1.2" fill="#6e6e6e">1:1</text></g>
<g transform="translate(247 42)"><path d="M0.5 0.5H25.5V13Q25.5 17 21 17.5H0.5Z" fill="#fcfbfb" stroke="#bf1a30" stroke-width="1" stroke-linejoin="round"/><path d="M8.5 8V3.5H17.5V8M8.5 5.5H17.5M9 7H17" stroke="#6e6e6e" stroke-width="1" fill="none"/><path d="M5.5 8.5H20.5V13.5H17.5V11.5H8.5V13.5H5.5Z" stroke="#6e6e6e" stroke-width="1" fill="#fff"/><path d="M8.5 13.5H17.5" stroke="#6e6e6e"/></g>
<g transform="translate(286 42)"><path d="M0.5 0.5H25.5V13Q25.5 17 21 17.5H0.5Z" fill="#fcfbfb" stroke="#bf1a30" stroke-width="1" stroke-linejoin="round"/><path d="M5.5 3.5H19.5V12.5H18.5V15.5L15.5 12.5H5.5Z" stroke="#6e6e6e" stroke-width="1" fill="#fff"/><text x="12.5" y="11.5" text-anchor="middle" font-family="Liberation Sans, sans-serif" font-weight="bold" font-size="10" fill="#6e6e6e">?</text></g>
<g font-family="Liberation Sans, Arial, sans-serif">
<text x="22.50" y="18" font-size="13.5" font-weight="bold" fill="#fff" letter-spacing="-0.095" xml:space="preserve">http://web.s-investor.de - Chartanalyse - Mozilla Firefox</text>
<text x="330.80" y="54" font-size="11" fill="#000" letter-spacing="-0.300" xml:space="preserve">Zeitraum:</text>
<text x="384.40" y="54" font-size="11" fill="#fff" letter-spacing="-0.962" xml:space="preserve">1 Jahr</text>
<text x="500.00" y="54" font-size="11" fill="#000" letter-spacing="-0.201" xml:space="preserve">Periodizität:</text>
<text x="563.70" y="54" font-size="11" fill="#fff" letter-spacing="-0.559" xml:space="preserve">Tag</text>
<text x="705.90" y="46" font-size="11" font-weight="bold" fill="#a9a9a9" letter-spacing="0.463" xml:space="preserve">Verlauf</text>
<text x="793.50" y="46" font-size="11" font-weight="bold" fill="#a9a9a9" letter-spacing="0.192" xml:space="preserve">Einstellungen</text>
<text x="913.40" y="46" font-size="11" font-weight="bold" fill="#a9a9a9" letter-spacing="0.313" xml:space="preserve">Indikatoren</text>
<text x="713.20" y="62" font-size="11" font-weight="bold" fill="#a9a9a9" letter-spacing="0.295" xml:space="preserve">Kurslisten geteilt</text>
<text x="874.20" y="62" font-size="11" font-weight="bold" fill="#a9a9a9" letter-spacing="0.260" xml:space="preserve">Kurslisten privat</text>
<text x="15.00" y="81" font-size="11" fill="#f4f4f4" letter-spacing="-0.414" xml:space="preserve">RWE ST A  (GER) EUR 85,78 (delayed)</text>
<text x="211.00" y="81" font-size="11" fill="#ee8c8c" letter-spacing="-0.514" xml:space="preserve">-0,21%</text>
<text x="260.00" y="81" font-size="11" fill="#f4f4f4" letter-spacing="-0.447" xml:space="preserve">17:35 CEST, 24.September 2007</text>
<text x="423.80" y="81" font-size="11" fill="#f4f4f4" letter-spacing="-0.943" xml:space="preserve">RIC: RWEG.DE</text>
<text x="503.80" y="81" font-size="11" fill="#f4f4f4" letter-spacing="-0.266" xml:space="preserve">WKN: 703712</text>
<text x="582.80" y="81" font-size="11" fill="#f4f4f4" letter-spacing="-0.509" xml:space="preserve">ISIN: DE0007037129</text>
<text x="39.80" y="104" font-size="11" fill="#000" letter-spacing="-0.178" xml:space="preserve">BB (20/2.0)</text>
<text x="134.00" y="104" font-size="11" fill="#000" letter-spacing="-0.467" xml:space="preserve">2. EMA (200)</text>
<text x="27.90" y="531.6" font-size="11" fill="#000" letter-spacing="-0.275" xml:space="preserve">Moving Average Convergence Divergence (MACD) P1=12, P2=26</text>
<text x="384.00" y="531.6" font-size="11" fill="#000" letter-spacing="-0.352" xml:space="preserve">Trigger P3=9</text>
<text x="6.00" y="731" font-size="11" fill="#000" letter-spacing="0.016" xml:space="preserve">Applet S-Investor-Chartanalyse started</text>
<text x="969.50" y="136.5" font-size="11" fill="#000" letter-spacing="-0.402" xml:space="preserve">90,00</text>
<text x="969.50" y="217.5" font-size="11" fill="#000" letter-spacing="-0.402" xml:space="preserve">85,00</text>
<text x="969.50" y="298.5" font-size="11" fill="#000" letter-spacing="-0.402" xml:space="preserve">80,00</text>
<text x="969.50" y="379.5" font-size="11" fill="#000" letter-spacing="-0.402" xml:space="preserve">75,00</text>
<text x="969.50" y="460.5" font-size="11" fill="#000" letter-spacing="-0.402" xml:space="preserve">70,00</text>
<text x="974.20" y="567.4" font-size="11" fill="#000" letter-spacing="-0.764" xml:space="preserve">2,00</text>
<text x="974.20" y="605.4" font-size="11" fill="#000" letter-spacing="-0.764" xml:space="preserve">1,00</text>
<text x="974.20" y="643.4" font-size="11" fill="#000" letter-spacing="-0.764" xml:space="preserve">0,00</text>
<text x="970.50" y="681.4" font-size="11" fill="#000" letter-spacing="-0.564" xml:space="preserve">-1,00</text>
<text x="16.25" y="516" font-size="11" fill="#000" letter-spacing="-0.681" xml:space="preserve">1.10.06</text>
<text x="101.25" y="516" font-size="11" fill="#000" letter-spacing="-0.544" xml:space="preserve">1.11.06</text>
<text x="181.75" y="516" font-size="11" fill="#000" letter-spacing="-0.681" xml:space="preserve">1.12.06</text>
<text x="252.35" y="516" font-size="11" fill="#000" letter-spacing="-0.833" xml:space="preserve">1.1.07</text>
<text x="337.85" y="516" font-size="11" fill="#000" letter-spacing="-0.833" xml:space="preserve">1.2.07</text>
<text x="411.35" y="516" font-size="11" fill="#000" letter-spacing="-0.833" xml:space="preserve">1.3.07</text>
<text x="489.35" y="516" font-size="11" fill="#000" letter-spacing="-0.833" xml:space="preserve">1.4.07</text>
<text x="557.35" y="516" font-size="11" fill="#000" letter-spacing="-0.833" xml:space="preserve">1.5.07</text>
<text x="638.85" y="516" font-size="11" fill="#000" letter-spacing="-0.833" xml:space="preserve">1.6.07</text>
<text x="713.85" y="516" font-size="11" fill="#000" letter-spacing="-0.833" xml:space="preserve">1.7.07</text>
<text x="797.85" y="516" font-size="11" fill="#000" letter-spacing="-0.833" xml:space="preserve">1.8.07</text>
<text x="879.85" y="516" font-size="11" fill="#000" letter-spacing="-0.833" xml:space="preserve">1.9.07</text>
</g>
</svg>
</body></html>
